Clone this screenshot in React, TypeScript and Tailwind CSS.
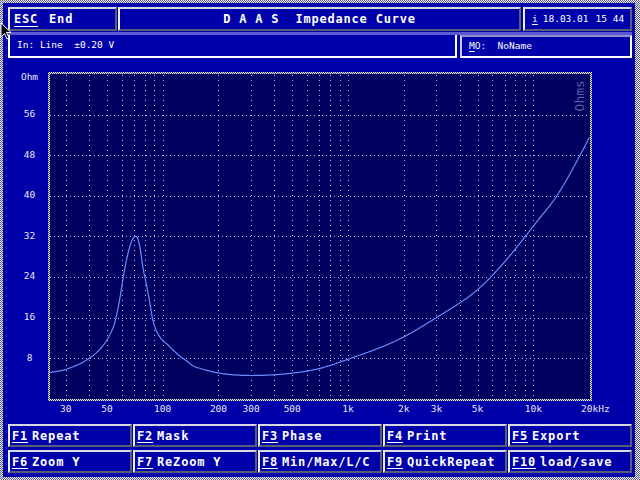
import React from 'react';

// plot geometry (inner area of the framed chart)
const PW = 540;
const PH = 325;
const X0 = 50; // absolute left of plot inner area
const fx = (f: number) => 162.7 - X0 + 185.3 * (Math.log10(f) - 2);
const zy = (z: number) => (64 - z) * 5.075;

const curvePts: [number, number][] = [
  [24.7, 5.2], [30, 5.8], [39.5, 7.8], [45.9, 9.8], [50, 11.6], [55.3, 15.2], [58.8, 19.9], [61, 23.6],
  [64.9, 28.6], [69.1, 31.6], [72, 32], [75.4, 29.8], [78.3, 25.8], [82.3, 21.9], [85.4, 18.7],
  [88.6, 15.4], [94.3, 12.8], [100, 11.5], [105.5, 10.8], [112.2, 9.8], [124, 8.4], [135.2, 7.4],
  [145.7, 6.5], [159, 6.0], [198.8, 5.1], [296, 4.6], [486, 5.0], [707, 6.0], [1000, 7.8],
  [1830, 11.5], [3000, 16], [5000, 21.5], [7000, 27], [10500, 35], [13400, 40], [17900, 48], [20000, 51.4],
];

function makeInterp(pts: [number, number][]) {
  const xs = pts.map((p) => Math.log10(p[0]));
  const ys = pts.map((p) => p[1]);
  const n = xs.length;
  const d: number[] = [];
  for (let i = 0; i < n - 1; i++) d.push((ys[i + 1] - ys[i]) / (xs[i + 1] - xs[i]));
  const m: number[] = new Array(n).fill(0);
  m[0] = d[0];
  m[n - 1] = d[n - 2];
  for (let i = 1; i < n - 1; i++) m[i] = d[i - 1] * d[i] <= 0 ? 0 : (d[i - 1] + d[i]) / 2;
  for (let i = 0; i < n - 1; i++) {
    if (d[i] === 0) {
      m[i] = 0;
      m[i + 1] = 0;
      continue;
    }
    const a = m[i] / d[i];
    const b = m[i + 1] / d[i];
    const s = a * a + b * b;
    if (s > 9) {
      const t = 3 / Math.sqrt(s);
      m[i] = t * a * d[i];
      m[i + 1] = t * b * d[i];
    }
  }
  return (x: number) => {
    let i = 0;
    while (i < n - 2 && x > xs[i + 1]) i++;
    const h = xs[i + 1] - xs[i];
    const t = Math.min(1, Math.max(0, (x - xs[i]) / h));
    const t2 = t * t;
    const t3 = t2 * t;
    return (
      (2 * t3 - 3 * t2 + 1) * ys[i] +
      (t3 - 2 * t2 + t) * h * m[i] +
      (-2 * t3 + 3 * t2) * ys[i + 1] +
      (t3 - t2) * h * m[i + 1]
    );
  };
}

const impedance = makeInterp(curvePts);

const curvePath = (() => {
  const parts: string[] = [];
  for (let px = 0; px <= PW; px++) {
    const lg = 2 + (px + X0 - 162.7) / 185.3;
    const y = zy(impedance(lg));
    parts.push(`${px === 0 ? 'M' : 'L'}${px} ${y.toFixed(1)}`);
  }
  return parts.join(' ');
})();

const gridFreqs: number[] = [];
[10, 100, 1000].forEach((dec) => {
  for (let k = 1; k <= 9; k++) {
    const f = dec * k;
    if (f >= 30 && f <= 10000) gridFreqs.push(f);
  }
});
gridFreqs.push(10000);

const ohmTicks = [56, 48, 40, 32, 24, 16, 8];
const freqLabels: [number, string][] = [
  [30, '30'], [50, '50'], [100, '100'], [200, '200'], [300, '300'], [500, '500'],
  [1000, '1k'], [2000, '2k'], [3000, '3k'], [5000, '5k'], [10000, '10k'],
];

const mono = "font-['DejaVu_Sans_Mono','Liberation_Mono',monospace]";
const bevel =
  'border-2 border-t-[#d8d8e0] border-l-[#f0f0f0] border-b-[#5c5c74] border-r-[#5c5c74] bg-[#0000aa]';

function FKey({ k, label }: { k: string; label: string }) {
  return (
    <div className={`h-[23px] ${bevel} flex items-center pl-[2px] text-white font-bold text-[12px] tracking-[0.8px] ${mono}`}>
      <span className="underline underline-offset-[2px] decoration-1">{k}</span>
      <span className="ml-[4px] whitespace-pre">{label}</span>
    </div>
  );
}

export default function App() {
  return (
    <div className="w-[640px] h-[480px] overflow-hidden bg-[image:repeating-conic-gradient(#ececec_0%_25%,#5a5a90_0%_50%)] bg-[length:2px_2px] pt-[3px] pl-[3px] pr-[5px] pb-[3px]">
      <div className="relative h-full bg-[#0000aa] flex flex-col">
        {/* Title row */}
        <div className="mt-[4px] pl-[5px] pr-[3px] flex h-[24px]">
          <div className={`w-[109px] ${bevel} flex items-center pl-[4px] text-white font-bold text-[12px] tracking-[0.8px] ${mono}`}>
            <span className="underline underline-offset-[3px] decoration-1">ESC</span>
            <span className="ml-[11px]">End</span>
          </div>
          <div className={`ml-[1px] flex-1 ${bevel} flex items-center justify-center text-white font-bold text-[12px] tracking-[0.8px] whitespace-pre ${mono}`}>
            D A A S  Impedance Curve
          </div>
          <div className={`ml-[2px] w-[109px] ${bevel} flex items-center pl-[7px] text-white text-[9.5px] ${mono}`}>
            <span className="underline underline-offset-[2px]">i</span>
            <span className="ml-[5px]">18.03.01</span>
            <span className="ml-[7px] whitespace-pre">15 44</span>
          </div>
        </div>

        {/* Separator band */}
        <div className="mt-[1px] ml-[5px] mr-[3px] h-[3px] bg-[#5a5ad2]" />

        {/* Status row */}
        <div className="pl-[5px] pr-[3px] flex h-[23px]">
          <div className={`flex-1 border-2 border-t-0 border-white bg-[#0000aa] flex items-center pl-[7px] text-white text-[9.5px] whitespace-pre ${mono}`}>
            In: Line  ±0.20 V
          </div>
          <div className={`ml-[3px] w-[172px] border-2 border-t-[#9090c8] border-l-[#c8c8e0] border-b-white border-r-white bg-[#0000aa] flex items-center pl-[7px] text-white text-[9.5px] whitespace-pre ${mono}`}>
            <span className="underline underline-offset-[2px]">M</span>O:  NoName
          </div>
        </div>

        {/* Chart */}
        <div className="relative">
          {/* y labels */}
          <div
            className={`absolute left-[9px] w-[35px] h-[14px] leading-[14px] text-center text-[#e8e8f0] text-[9.5px] ${mono}`}
            style={{ top: 19 - 7 }}
          >
            Ohm
          </div>
          {ohmTicks.map((z) => (
            <div
              key={z}
              className={`absolute left-[9px] w-[35px] h-[14px] leading-[14px] text-center text-[#e8e8f0] text-[9.5px] ${mono}`}
              style={{ top: 114 + (56 - z) * 5.075 - 58 - 7 }}
            >
              {z}
            </div>
          ))}

          <div className="mt-[14px] ml-[45px] w-[544px] h-[329px] p-[2px] bg-[image:repeating-conic-gradient(#f0f0f0_0%_25%,#3a3a80_0%_50%)] bg-[length:2px_2px]">
            <div className="relative w-[540px] h-[325px] bg-[#00005e]">
              <svg width={PW} height={PH} className="block">
                {ohmTicks.map((z) => (
                  <line
                    key={z}
                    x1={0}
                    x2={PW}
                    y1={Math.round(zy(z)) + 0.5}
                    y2={Math.round(zy(z)) + 0.5}
                    stroke="#c0c0e0"
                    strokeWidth={1}
                    strokeDasharray="1 3"
                    shapeRendering="crispEdges"
                  />
                ))}
                {gridFreqs.map((f) => (
                  <line
                    key={f}
                    x1={Math.round(fx(f)) + 0.5}
                    x2={Math.round(fx(f)) + 0.5}
                    y1={1}
                    y2={PH}
                    stroke="#c0c0e0"
                    strokeWidth={1}
                    strokeDasharray="1 4"
                    shapeRendering="crispEdges"
                  />
                ))}
                <path d={curvePath} fill="none" stroke="#6a8cff" strokeWidth={1.2} />
              </svg>
              <div className="absolute right-[2px] top-[1px] h-[42px] w-[16px] flex items-center justify-center">
                <span className={`-rotate-90 text-[13px] text-[#5c5ca8] whitespace-nowrap ${mono}`}>Ohms</span>
              </div>
            </div>
          </div>

          {/* x labels */}
          <div className="relative h-[16px]">
            {freqLabels.map(([f, t]) => (
              <div
                key={t}
                className={`absolute top-[1px] w-[40px] h-[14px] leading-[14px] text-center text-[#e8e8f0] text-[9.5px] ${mono}`}
                style={{ left: X0 + fx(f) - 3 - 20 }}
              >
                {t}
              </div>
            ))}
            <div
              className={`absolute top-[1px] h-[14px] leading-[14px] text-[#e8e8f0] text-[9.5px] ${mono}`}
              style={{ left: 581 - 3 }}
            >
              20kHz
            </div>
          </div>
        </div>

        {/* Function keys */}
        <div className="mt-[7px] pl-[5px] pr-[3px] grid grid-cols-5 gap-x-[1px] gap-y-[3px]">
          <FKey k="F1" label="Repeat" />
          <FKey k="F2" label="Mask" />
          <FKey k="F3" label="Phase" />
          <FKey k="F4" label="Print" />
          <FKey k="F5" label="Export" />
          <FKey k="F6" label="Zoom Y" />
          <FKey k="F7" label="ReZoom Y" />
          <FKey k="F8" label="Min/Max/L/C" />
          <FKey k="F9" label="QuickRepeat" />
          <FKey k="F10" label="load/save" />
        </div>

        {/* mouse pointer */}
        <svg className="absolute -left-[3px] top-[19px]" width="14" height="20" viewBox="0 0 14 20">
          <path d="M1 1 L1 15 L4.5 11.5 L7 17 L9 16 L6.5 10.5 L11 10.5 Z" fill="#000" stroke="#fff" strokeWidth="1" />
        </svg>
      </div>
    </div>
  );
}
